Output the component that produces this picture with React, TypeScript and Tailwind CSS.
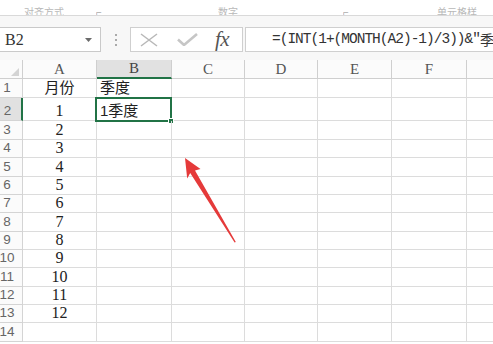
import React from "react";

const cols = [
  { l: "A", w: "w-[74px]" },
  { l: "B", w: "w-[75px]" },
  { l: "C", w: "w-[73px]" },
  { l: "D", w: "w-[73px]" },
  { l: "E", w: "w-[74px]" },
  { l: "F", w: "w-[75px]" },
  { l: "", w: "w-[60px]" },
];

const rows: { n: number; h: string; a: string; b: string }[] = [
  { n: 1, h: "h-[19px]", a: "月份", b: "季度" },
  { n: 2, h: "h-[23px]", a: "1", b: "1季度" },
  { n: 3, h: "h-[19px]", a: "2", b: "" },
  { n: 4, h: "h-[18px]", a: "3", b: "" },
  { n: 5, h: "h-[19px]", a: "4", b: "" },
  { n: 6, h: "h-[18px]", a: "5", b: "" },
  { n: 7, h: "h-[18px]", a: "6", b: "" },
  { n: 8, h: "h-[19px]", a: "7", b: "" },
  { n: 9, h: "h-[18px]", a: "8", b: "" },
  { n: 10, h: "h-[18px]", a: "9", b: "" },
  { n: 11, h: "h-[19px]", a: "10", b: "" },
  { n: 12, h: "h-[18px]", a: "11", b: "" },
  { n: 13, h: "h-[18px]", a: "12", b: "" },
  { n: 14, h: "h-[19px]", a: "", b: "" },
];

const mono = "font-['Liberation_Mono','Noto_Sans_CJK_SC',monospace]";
const serif = "font-['Liberation_Serif','Noto_Sans_CJK_SC',serif]";
const cjk = "font-['Liberation_Sans','Noto_Sans_CJK_SC',sans-serif]";

export default function App() {
  return (
    <div className="relative w-[493px] h-[344px] overflow-hidden bg-white font-['Liberation_Sans','Noto_Sans_CJK_SC',sans-serif]">
      {/* ribbon remnant */}
      <div className="h-[16px] border-b border-[#d9d9d9] overflow-hidden flex items-start text-[10px] leading-[10px] text-[#8a8a8a] pt-[8px]">
        <span className="ml-[24px] w-[40px] opacity-60">对齐方式</span>
        <span className="ml-[32px] w-[12px] opacity-70">⌐</span>
        <span className="ml-[110px] w-[30px] opacity-60">数字</span>
        <span className="ml-[95px] w-[12px] opacity-70">⌐</span>
        <span className="ml-[82px] opacity-60">单元格样</span>
      </div>

      {/* formula bar */}
      <div className="h-[44px] bg-[#f7f7f7] pt-[11px] flex items-start">
        <div className="-ml-px w-[102px] h-[25px] bg-white border border-[#c9c9c9] flex items-center justify-between pl-[5px] pr-[8px]">
          <span className={`${serif} text-[16px] text-[#333]`}>B2</span>
          <svg width="7" height="4" viewBox="0 0 7 4">
            <polygon points="0,0 7,0 3.5,4" fill="#6b6b6b" />
          </svg>
        </div>
        <div className="w-[29px] h-[25px] flex flex-col items-center justify-center gap-[3px]">
          <span className="w-[2px] h-[2px] bg-[#aaa]" />
          <span className="w-[2px] h-[2px] bg-[#aaa]" />
          <span className="w-[2px] h-[2px] bg-[#aaa]" />
        </div>
        <div className="w-[113px] h-[25px] bg-white border border-[#cfcfcf] flex items-center pl-[9px]">
          <svg width="18" height="14" viewBox="0 0 18 14">
            <path d="M1 1 L17 13 M17 1 L1 13" stroke="#b8b8b8" strokeWidth="1.5" fill="none" />
          </svg>
          <svg className="ml-[19px]" width="21" height="13" viewBox="0 0 21 13">
            <path d="M1 6.5 L7 12 L20 1" stroke="#c6c6c6" strokeWidth="2.6" fill="none" />
          </svg>
          <span className="ml-[17px] font-['Liberation_Serif',serif] italic text-[21px] leading-[21px] text-[#555] tracking-[-0.5px]">fx</span>
        </div>
        <div className="ml-[2px] flex-1 -mr-[2px] h-[25px] bg-white border border-[#cfcfcf] flex items-center pl-[26px] overflow-hidden whitespace-nowrap">
          <span className={`${mono} text-[14.5px] tracking-[-1px] text-[#333]`}>=(INT(1+(MONTH(A2)-1)/3))&amp;"</span>
          <span className="font-['Noto_Sans_CJK_SC',sans-serif] text-[14px] text-[#333]">季</span>
        </div>
      </div>

      {/* column headers */}
      <div className="flex h-[19px] bg-[#fbfbfb]">
        <div className="w-[23px] shrink-0 border-r border-b border-[#cfcfcf] flex items-end justify-end pr-[3px] pb-[2px]">
          <svg width="8" height="8" viewBox="0 0 8 8">
            <polygon points="8,0 8,8 0,8" fill="#d4d4d4" />
          </svg>
        </div>
        {cols.map((c, i) => (
          <div
            key={i}
            className={
              c.l === "B"
                ? `${c.w} shrink-0 border-r border-[#cfcfcf] border-b-2 border-b-[#217346] bg-[#e1e1e1] flex items-center justify-center ${serif} text-[15px] text-[#444]`
                : `${c.w} shrink-0 border-r border-b border-[#cfcfcf] flex items-center justify-center ${serif} text-[15px] text-[#555]`
            }
          >
            {c.l}
          </div>
        ))}
      </div>

      {/* rows */}
      {rows.map((r) => (
        <div key={r.n} className={`flex ${r.h}`}>
          <div
            className={
              r.n === 2
                ? "w-[23px] shrink-0 border-b border-[#d4d4d4] border-r-2 border-r-[#217346] bg-[#e1e1e1] flex items-end justify-center pr-[6px] pb-[1px] text-[13.5px] leading-[16px] text-[#666]"
                : "w-[23px] shrink-0 border-b border-r border-[#d4d4d4] bg-[#fbfbfb] flex items-end justify-center pr-[8px] pb-[1px] text-[13.5px] leading-[16px] text-[#666]"
            }
          >
            {r.n}
          </div>
          <div
            className={`w-[74px] shrink-0 border-b border-r border-[#dcdcdc] flex items-end justify-center pb-[1px] leading-[16px] text-[#222] ${
              r.n === 1 ? `${cjk} text-[15px]` : `${serif} text-[16px]`
            }`}
          >
            {r.a}
          </div>
          <div className={`relative w-[75px] shrink-0 border-b border-r border-[#dcdcdc] flex items-end pl-[3px] pb-[1px] leading-[17px] text-[15px] text-[#222] ${cjk}`}>
            {r.b}
            {r.n === 2 && (
              <div className="absolute -left-[2px] -top-[1px] w-[77px] h-[25px] border-2 border-[#217346]">
                <div className="absolute -right-[4px] -bottom-[4px] w-[6px] h-[6px] bg-[#217346] border border-white" />
              </div>
            )}
          </div>
          <div className="w-[73px] shrink-0 border-b border-r border-[#dcdcdc]" />
          <div className="w-[73px] shrink-0 border-b border-r border-[#dcdcdc]" />
          <div className="w-[74px] shrink-0 border-b border-r border-[#dcdcdc]" />
          <div className="w-[75px] shrink-0 border-b border-r border-[#dcdcdc]" />
          <div className="w-[60px] shrink-0 border-b border-r border-[#dcdcdc]" />
        </div>
      ))}

      {/* red arrow annotation */}
      <svg className="absolute left-0 top-0 pointer-events-none" width="493" height="344" viewBox="0 0 493 344">
        <polygon
          points="185,158 200.5,169 195,170.5 235.8,242 234.6,242.6 190.2,173 187.2,178.5"
          fill="#e53a3a"
        />
      </svg>
    </div>
  );
}
